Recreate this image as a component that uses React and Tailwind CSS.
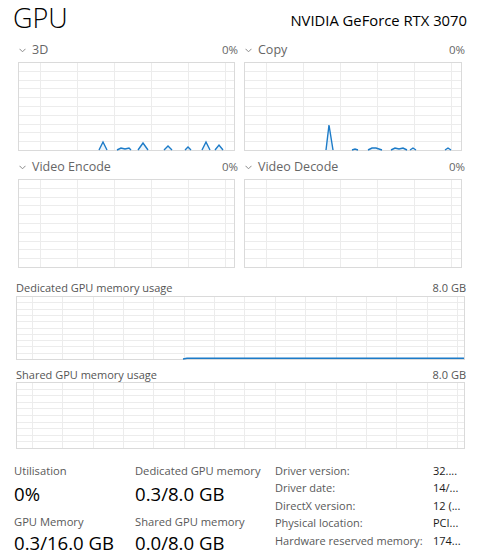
const BLUE = '#1c7bc8';

function Grid({ w, h, vStart, vStep, rows = 10, spikes = [] }) {
  const verts = [];
  for (let x = vStart; x < w - 1; x += vStep) verts.push(Math.round(x));
  const hors = [];
  for (let i = 1; i < rows; i++) hors.push(Math.round((i * (h - 1)) / rows));
  return (
    <svg width={w} height={h} className="block" shapeRendering="crispEdges">
      {verts.map((x) => (
        <line key={'v' + x} x1={x + 0.5} y1={0} x2={x + 0.5} y2={h} stroke="#ececec" />
      ))}
      {hors.map((y) => (
        <line key={'h' + y} x1={0} y1={y + 0.5} x2={w} y2={y + 0.5} stroke="#ececec" />
      ))}
      <rect x={0.5} y={0.5} width={w - 1} height={h - 1} fill="none" stroke="#dadada" />
      {spikes.map((pts, i) => (
        <g key={i} shapeRendering="auto">
          <polygon points={pts.map((p) => p.join(',')).join(' ')} fill={BLUE} fillOpacity="0.08" />
          <polyline points={pts.map((p) => p.join(',')).join(' ')} fill="none" stroke={BLUE} strokeWidth="1.4" />
        </g>
      ))}
    </svg>
  );
}

function Chevron() {
  return (
    <svg width="7" height="5" viewBox="0 0 7 5" className="block">
      <polyline points="0.5,0.8 3.5,3.8 6.5,0.8" fill="none" stroke="#8a8a8a" strokeWidth="1" />
    </svg>
  );
}

function SmallChart({ title, w, spikes }) {
  return (
    <div className="flex flex-col" style={{ width: w }}>
      <div className="flex items-center justify-between h-[16px] leading-[16px] mt-[2px] -mr-[3px]">
        <div className="flex items-center gap-[6px] pl-[1px]">
          <Chevron />
          <span className="text-[12.5px] text-[#666666]">{title}</span>
        </div>
        <span className="text-[11.5px] text-[#666666]">0%</span>
      </div>
      <div className="mt-[4px]">
        <Grid w={w} h={89} vStart={22} vStep={37} spikes={spikes} />
      </div>
    </div>
  );
}

const threeD = [
  [[81, 88], [85, 80], [89, 88]],
  [[99, 88], [103, 86], [107, 87], [111, 86], [113, 88]],
  [[120, 88], [125, 81], [130, 88]],
  [[146, 88], [150, 84], [154, 88]],
  [[167, 88], [170, 85], [173, 88]],
  [[184, 88], [188, 80], [192, 88]],
  [[197, 88], [201, 83], [205, 88]],
];

const copy = [
  [[82, 88], [85, 63], [89, 88]],
  [[108, 88], [111, 87], [114, 88]],
  [[124, 88], [128, 86], [132, 86], [138, 88]],
  [[147, 88], [151, 86], [155, 87], [159, 86], [163, 88]],
  [[166, 88], [169, 86], [172, 88]],
  [[201, 88], [204, 86], [207, 88]],
];

const rightRows = [
  ['Driver version:', '32....'],
  ['Driver date:', '14/...'],
  ['DirectX version:', '12 (...'],
  ['Physical location:', 'PCI...'],
  ['Hardware reserved memory:', '174...'],
];

export default function App() {
  return (
    <div
      className="w-[481px] h-[556px] bg-white overflow-hidden px-4 text-[#1a1a1a]"
      style={{ fontFamily: '"Open Sans", "Noto Sans", sans-serif' }}
    >
      {/* Header */}
      <div className="flex items-start justify-between h-[40px] -ml-[3px] -mr-[2px]">
        <h1 className="text-[27px] leading-[37px] -mt-[1px] font-light text-black">GPU</h1>
        <span className="mt-[10px] text-[14.8px] leading-[20px] text-black">NVIDIA GeForce RTX 3070</span>
      </div>

      {/* Engine charts */}
      <div className="flex gap-[9px] px-[2px]">
        <SmallChart title="3D" w={217} spikes={threeD} />
        <SmallChart title="Copy" w={218} spikes={copy} />
      </div>
      <div className="flex gap-[9px] px-[2px] mt-[6px]">
        <SmallChart title="Video Encode" w={217} spikes={[]} />
        <SmallChart title="Video Decode" w={218} spikes={[]} />
      </div>

      {/* Memory charts */}
      <div className="mt-[12px] flex justify-between h-[16px] leading-[16px] text-[11px] text-[#555555]">
        <span>Dedicated GPU memory usage</span>
        <span className="-mr-[1px]">8.0 GB</span>
      </div>
      <Grid
        w={449}
        h={64}
        vStart={16}
        vStep={30.35}
        spikes={[[[167, 63], [171, 62.3], [448, 62.3]]]}
      />
      <div className="mt-[7px] flex justify-between h-[16px] leading-[16px] text-[11px] text-[#555555]">
        <span>Shared GPU memory usage</span>
        <span className="-mr-[1px]">8.0 GB</span>
      </div>
      <div className="-mt-[1px]">
        <Grid w={449} h={67} vStart={16} vStep={30.35} spikes={[]} />
      </div>

      {/* Stats */}
      <div className="mt-[14px] flex">
        <div className="grid grid-cols-[121px_140px] -ml-[2px]">
          <div className="flex flex-col">
            <span className="text-[11.2px] leading-[16px] text-[#595959]">Utilisation</span>
            <span className="mt-[3px] text-[18.6px] leading-[24px] text-black">0%</span>
          </div>
          <div className="flex flex-col">
            <span className="text-[11.2px] leading-[16px] text-[#595959]">Dedicated GPU memory</span>
            <span className="mt-[3px] text-[18.6px] leading-[24px] text-black">0.3/8.0 GB</span>
          </div>
          <div className="flex flex-col mt-[8px]">
            <span className="text-[11.2px] leading-[16px] text-[#595959]">GPU Memory</span>
            <span className="mt-[1px] text-[18.6px] leading-[24px] text-black">0.3/16.0 GB</span>
          </div>
          <div className="flex flex-col mt-[8px]">
            <span className="text-[11.2px] leading-[16px] text-[#595959]">Shared GPU memory</span>
            <span className="mt-[1px] text-[18.6px] leading-[24px] text-black">0.0/8.0 GB</span>
          </div>
        </div>
        <div className="flex flex-col text-[11px] -mt-[1px]">
          {rightRows.map(([k, v]) => (
            <div key={k} className="flex h-[17.6px] items-center">
              <span className="w-[158px] text-[#595959] whitespace-nowrap">{k}</span>
              <span className="text-[#1a1a1a]">{v}</span>
            </div>
          ))}
        </div>
      </div>
    </div>
  );
}
